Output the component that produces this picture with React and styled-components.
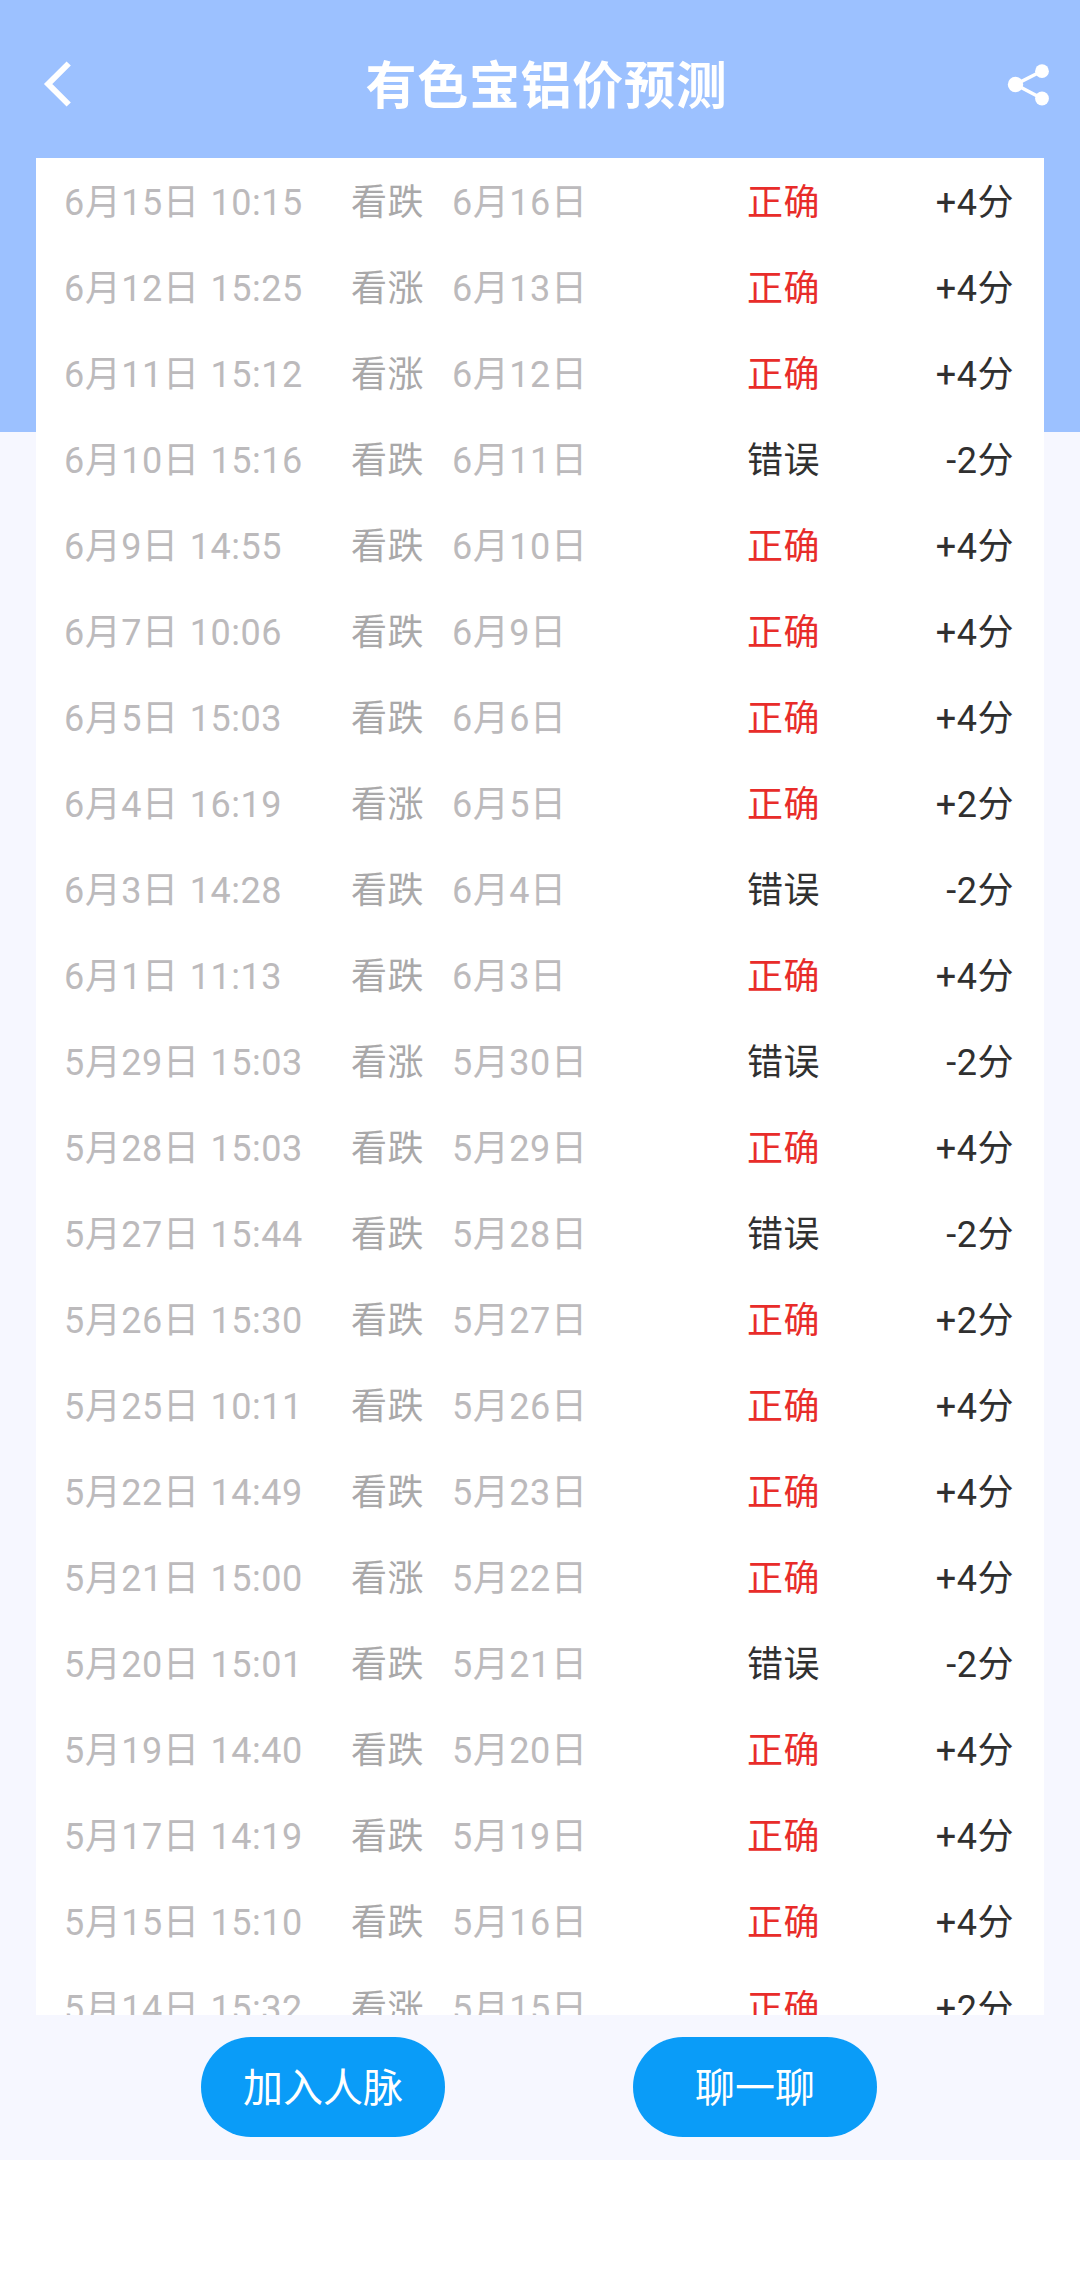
import React from "react";
import styled, { createGlobalStyle } from "styled-components";

const Global = createGlobalStyle`
  * { box-sizing: border-box; }
  body { margin: 0; background: #fff; font-family: Roboto, "Noto Sans CJK SC", sans-serif; }
`;
const Screen = styled.div`
  width: 1080px;
  height: 2292px;
  background: linear-gradient(#9cc1ff 0 432px, #f6f7ff 432px 2160px, #fff 2160px);
  overflow: hidden;
`;
const Header = styled.header`
  height: 158px;
  padding: 10px 30px 0 36px;
  display: flex;
  align-items: center;
  justify-content: space-between;
  color: #fff;
`;
const Title = styled.h1`
  margin: 0;
  padding: 5px 0 0 7px;
  font-size: 51px;
  letter-spacing: 0.7px;
  line-height: 76px;
  font-weight: 700;
`;
const List = styled.main`
  width: 1008px;
  height: 1857px;
  margin: 0 auto;
  background: #fff;
  overflow: hidden;
`;
const Row = styled.div`
  height: 86px;
  padding: 4px 30px 0 28px;
  display: grid;
  grid-template-columns: 287px 101px 295px 120px 1fr;
  align-items: center;
  font-size: 36px;
  line-height: 54px;
  letter-spacing: 0.55px;
  word-spacing: 1.5px;
  white-space: nowrap;
`;
const DateText = styled.span`
  color: #bcbabc;
`;
const Trend = styled.span`
  color: #a9a8a9;
`;
const Result = styled.span`
  color: ${(p) => (p.$ok ? "#e82c2a" : "#303030")};
`;
const Score = styled.span`
  color: #303030;
  text-align: right;
`;
const Footer = styled.footer`
  height: 145px;
  padding: 22px 203px 0 201px;
  display: flex;
  justify-content: space-between;
`;
const Button = styled.button`
  width: 244px;
  height: 100px;
  padding: 0 0 4px;
  border: 0;
  border-radius: 50px;
  background: #0a9cf8;
  color: #fff;
  font: inherit;
  font-size: 40px;
`;

const rows = [
  ["6月15日 10:15", "跌", "6月16日", 4], ["6月12日 15:25", "涨", "6月13日", 4],
  ["6月11日 15:12", "涨", "6月12日", 4], ["6月10日 15:16", "跌", "6月11日", -2],
  ["6月9日 14:55", "跌", "6月10日", 4], ["6月7日 10:06", "跌", "6月9日", 4],
  ["6月5日 15:03", "跌", "6月6日", 4], ["6月4日 16:19", "涨", "6月5日", 2],
  ["6月3日 14:28", "跌", "6月4日", -2], ["6月1日 11:13", "跌", "6月3日", 4],
  ["5月29日 15:03", "涨", "5月30日", -2], ["5月28日 15:03", "跌", "5月29日", 4],
  ["5月27日 15:44", "跌", "5月28日", -2], ["5月26日 15:30", "跌", "5月27日", 2],
  ["5月25日 10:11", "跌", "5月26日", 4], ["5月22日 14:49", "跌", "5月23日", 4],
  ["5月21日 15:00", "涨", "5月22日", 4], ["5月20日 15:01", "跌", "5月21日", -2],
  ["5月19日 14:40", "跌", "5月20日", 4], ["5月17日 14:19", "跌", "5月19日", 4],
  ["5月15日 15:10", "跌", "5月16日", 4], ["5月14日 15:32", "涨", "5月15日", 2],
];

export default function App() {
  return (
    <Screen>
      <Global />
      <Header>
        <svg width="44" height="50" viewBox="0 0 44 50" fill="none" stroke="#fff" strokeWidth="6">
          <path d="M32.7 4.5 12.2 25 32.7 45.5" />
        </svg>
        <Title>有色宝铝价预测</Title>
        <svg width="44" height="44" viewBox="0 0 44 44" fill="#fff">
          <path d="M36 9 9.5 22.5 36 36.5" fill="none" stroke="#fff" strokeWidth="3.6" />
          <circle cx="36" cy="9.2" r="6.9" />
          <circle cx="9.5" cy="22.5" r="7.7" />
          <circle cx="36" cy="36.5" r="6.9" />
        </svg>
      </Header>
      <List>
        {rows.map(([time, trend, target, score]) => (
          <Row key={time}>
            <DateText>{time}</DateText>
            <Trend>看{trend}</Trend>
            <DateText>{target}</DateText>
            <Result $ok={score > 0}>{score > 0 ? "正确" : "错误"}</Result>
            <Score>{score > 0 ? `+${score}` : score}分</Score>
          </Row>
        ))}
      </List>
      <Footer>
        <Button>加入人脉</Button>
        <Button>聊一聊</Button>
      </Footer>
    </Screen>
  );
}
